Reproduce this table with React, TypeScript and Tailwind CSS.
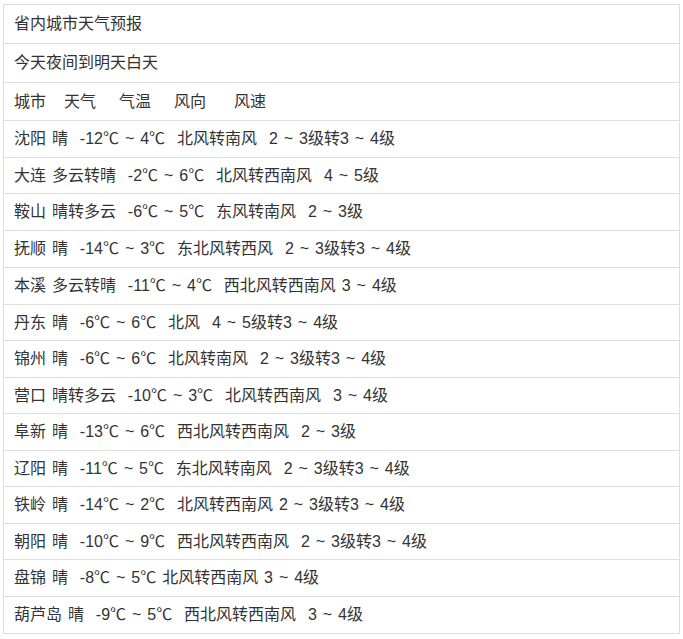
const rows: { text: string; h: string }[] = [
    { text: "沈阳 晴  -12℃ ~ 4℃  北风转南风  2 ~ 3级转3 ~ 4级", h: "h-[37px]" },
    { text: "大连 多云转晴  -2℃ ~ 6℃  北风转西南风  4 ~ 5级", h: "h-[36px]" },
    { text: "鞍山 晴转多云  -6℃ ~ 5℃  东风转南风  2 ~ 3级", h: "h-[37px]" },
    { text: "抚顺 晴  -14℃ ~ 3℃  东北风转西风  2 ~ 3级转3 ~ 4级", h: "h-[37px]" },
    { text: "本溪 多云转晴  -11℃ ~ 4℃  西北风转西南风 3 ~ 4级", h: "h-[37px]" },
    { text: "丹东 晴  -6℃ ~ 6℃  北风  4 ~ 5级转3 ~ 4级", h: "h-[36px]" },
    { text: "锦州 晴  -6℃ ~ 6℃  北风转南风  2 ~ 3级转3 ~ 4级", h: "h-[37px]" },
    { text: "营口 晴转多云  -10℃ ~ 3℃  北风转西南风  3 ~ 4级", h: "h-[36px]" },
    { text: "阜新 晴  -13℃ ~ 6℃  西北风转西南风  2 ~ 3级", h: "h-[37px]" },
    { text: "辽阳 晴  -11℃ ~ 5℃  东北风转南风  2 ~ 3级转3 ~ 4级", h: "h-[36px]" },
    { text: "铁岭 晴  -14℃ ~ 2℃  北风转西南风 2 ~ 3级转3 ~ 4级", h: "h-[37px]" },
    { text: "朝阳 晴  -10℃ ~ 9℃  西北风转西南风  2 ~ 3级转3 ~ 4级", h: "h-[36px]" },
    { text: "盘锦 晴  -8℃ ~ 5℃ 北风转西南风 3 ~ 4级", h: "h-[37px]" },
    { text: "葫芦岛 晴  -9℃ ~ 5℃  西北风转西南风  3 ~ 4级", h: "h-[37px]" },
]

const cell = "flex items-center px-[10px] border-b border-[#dddddd] whitespace-pre"

const App = () => {
    return (
        <div className="w-[683px] h-[639px] bg-white pt-[4px] pl-[3px] text-[16px] text-[#333333]"
            style={{ fontFamily: '"Liberation Sans", "Noto Sans CJK SC", sans-serif' }}>
            <div className="w-[677px] border-t border-l border-r border-[#dddddd]">
                <div className={`${cell} h-[39px]`}>省内城市天气预报</div>
                <div className={`${cell} h-[39px]`}>今天夜间到明天白天</div>
                <div className={`${cell} h-[38px]`}>
                    <span className="w-[50px]">城市</span>
                    <span className="w-[55px]">天气</span>
                    <span className="w-[55px]">气温</span>
                    <span className="w-[60px]">风向</span>
                    <span>风速</span>
                </div>
                {rows.map(r => (
                    <div key={r.text} className={`${cell} ${r.h} [word-spacing:1.5px]`}>{r.text}</div>
                ))}
            </div>
        </div>
    )
}

export default App
